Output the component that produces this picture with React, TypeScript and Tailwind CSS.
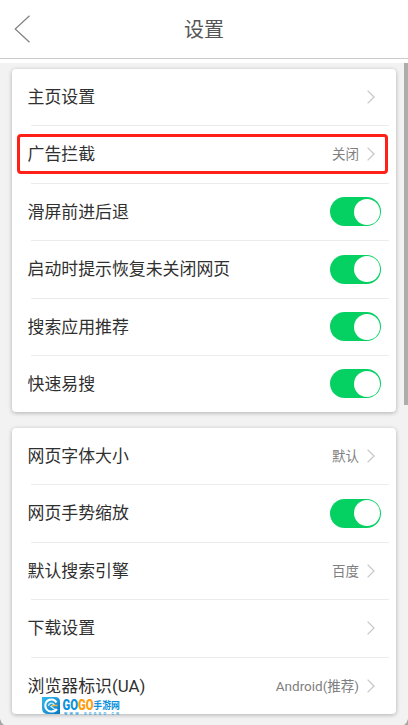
import React from 'react';
import clsx from 'clsx';

type Item = {
    label: string;
    value?: string;
    toggle?: boolean;
    highlighted?: boolean;
};

const BROWSER_ITEMS: Item[] = [
    { label: '主页设置' },
    { label: '广告拦截', value: '关闭', highlighted: true },
    { label: '滑屏前进后退', toggle: true },
    { label: '启动时提示恢复未关闭网页', toggle: true },
    { label: '搜索应用推荐', toggle: true },
    { label: '快速易搜', toggle: true },
];

const PAGE_ITEMS: Item[] = [
    { label: '网页字体大小', value: '默认' },
    { label: '网页手势缩放', toggle: true },
    { label: '默认搜索引擎', value: '百度' },
    { label: '下载设置' },
    { label: '浏览器标识(UA)', value: 'Android(推荐)' },
];

function Chevron() {
    return (
        <svg width="8" height="14" viewBox="0 0 8 14" fill="none" className="ml-2 mr-[6px] shrink-0">
            <path d="M0.6 0.6L7 7L0.6 13.4" stroke="#c8c8c8" strokeWidth="1.3" />
        </svg>
    );
}

function Switch() {
    return (
        <button
            type="button"
            role="switch"
            aria-checked="true"
            className="flex h-[29px] w-[51px] shrink-0 items-center justify-end rounded-full bg-[#04d162] pr-[1.5px]"
        >
            <span className="size-[26px] rounded-full bg-white" />
        </button>
    );
}

function Row({ item, last }: { item: Item; last: boolean }) {
    return (
        <div className="relative flex h-[57.4px] items-center justify-between pb-[1.5px] pl-[15.5px] pr-[15px]">
            <span className="text-[16.9px] leading-6 text-[#303030]">{item.label}</span>
            {item.toggle ? (
                <Switch />
            ) : (
                <span className="flex items-center">
                    <span className="text-[13.5px] leading-5 text-[#808080]">{item.value}</span>
                    <Chevron />
                </span>
            )}
            {!last && <span className="absolute bottom-0 left-[19px] right-[7px] h-px bg-[#ececec]" />}
            {item.highlighted && (
                <span className="absolute left-[4.5px] right-[8.5px] top-[7.5px] h-[40px] rounded-[4px] border-3 border-[#ff2018]" />
            )}
        </div>
    );
}

function Card({ items, className }: { items: Item[]; className?: string }) {
    return (
        <section
            className={clsx(
                'ml-3 w-96 overflow-hidden rounded-[4px] bg-white shadow-[0_1px_4px_rgba(0,0,0,0.28)]',
                className
            )}
        >
            {items.map((item, i) => (
                <Row key={item.label} item={item} last={i === items.length - 1} />
            ))}
        </section>
    );
}

function Watermark() {
    return (
        <svg width="86" height="22" viewBox="0 0 86 22" className="absolute left-[41px] top-[696px]">
            <defs>
                <linearGradient id="badge" x1="0" y1="0" x2="1" y2="1">
                    <stop offset="0" stopColor="#35b9ee" />
                    <stop offset="1" stopColor="#0878c4" />
                </linearGradient>
            </defs>
            <path d="M1 1H14Q19 1 19 6V18H7Q1 18 1 12Z" fill="url(#badge)" />
            <path d="M15.5 6.5A6 6 0 1 0 10.5 15.5Q14 15.5 16 13" fill="none" stroke="#fff" strokeWidth="2.2" />
            <path d="M7.5 10A3 3 0 0 1 13 8.5L10 10.5L14 13.5" fill="none" stroke="#c7edfc" strokeWidth="1.4" />
            <path d="M10.5 9.5H16.5" stroke="#f7b03a" strokeWidth="1.5" />
            <g fontFamily="Roboto, sans-serif" fontWeight="900" fontSize="15.5">
                <text x="21.5" y="14" textLength="15.5" lengthAdjust="spacingAndGlyphs" fill="#0d91dc">GO</text>
                <text x="37" y="14" textLength="15.5" lengthAdjust="spacingAndGlyphs" fill="#ff9d0a">GO</text>
            </g>
            <text x="52.3" y="13" fontFamily="'Noto Sans CJK SC', sans-serif" fontWeight="700" fontSize="10" textLength="26.5" lengthAdjust="spacingAndGlyphs" fill="#0d91dc">手游网</text>
            <text x="23" y="18.5" fontFamily="Roboto, sans-serif" fontWeight="700" fontSize="3.8" textLength="55" fill="#35a4df">WWW.GOGGO.CN</text>
        </svg>
    );
}

export default function App() {
    return (
        <div className="relative flex h-[725px] w-[408px] flex-col overflow-hidden bg-white font-[Roboto,'Noto_Sans_CJK_SC',sans-serif]">
            <header className="grid h-[59px] shrink-0 grid-cols-[60px_1fr_60px] items-center border-b border-[#cccccc]">
                <button type="button" aria-label="返回" className="pl-[14px]">
                    <svg width="17" height="28" viewBox="0 0 17 28" fill="none">
                        <path d="M15.5 0.7L1.2 14L15.5 27.3" stroke="#808080" strokeWidth="1.2" />
                    </svg>
                </button>
                <h1 className="pt-0.5 text-center text-[20px] leading-7 text-[#555555]">设置</h1>
            </header>

            <main className="mt-1 flex-1 overflow-hidden bg-[#f2f2f2] pt-[6px]">
                <Card items={BROWSER_ITEMS} className="h-[343px]" />
                <Card items={PAGE_ITEMS} className="mt-4 h-[286px]" />
            </main>

            <div className="absolute right-0 top-[63px] h-[342px] w-[4.5px] bg-[#adadad]" />
            <Watermark />

            {/* rounded screen corners */}
            <svg width="4" height="6" viewBox="0 0 4 6" className="absolute bottom-0 left-0">
                <path d="M0 0Q1 4 4 6H0Z" fill="#a5a5a5" />
            </svg>
            <svg width="4" height="6" viewBox="0 0 4 6" className="absolute bottom-0 right-0">
                <path d="M4 0Q3 4 0 6H4Z" fill="#a5a5a5" />
            </svg>
        </div>
    );
}
